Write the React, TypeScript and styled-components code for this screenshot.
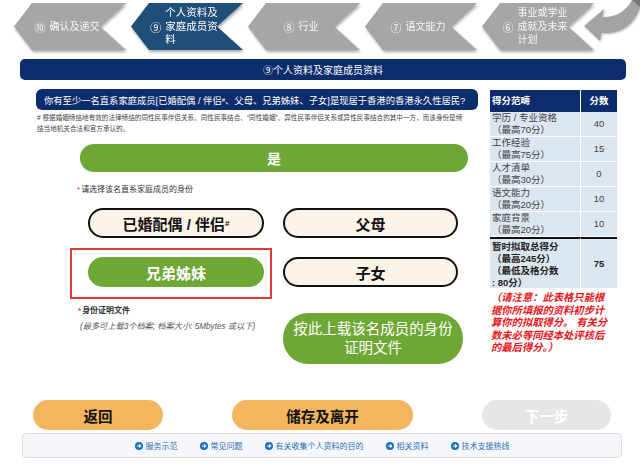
import React from "react";
import styled, { createGlobalStyle } from "styled-components";

const GlobalStyle = createGlobalStyle`
  html, body {
    margin: 0;
    padding: 0;
    background: #fff;
  }
  body {
    font-family: "Liberation Sans", "Noto Sans CJK SC", sans-serif;
    color: #333;
  }
`;

const NAVY = "#0c2c6c";
const GREEN = "#6ea834";
const ORANGE = "#f4b55e";

const Page = styled.div`
  width: 640px;
  height: 471px;
  overflow: hidden;
`;

/* ---------- step chevrons ---------- */
const StepBar = styled.div`
  position: relative;
  display: flex;
  gap: 5px;
  padding: 3px 0 0 14px;
  height: 47px;
`;

const StepShadow = styled.div`
  filter: drop-shadow(1px 2px 1.5px rgba(0, 0, 0, 0.35));
`;

const Step = styled.div<{ $active?: boolean }>`
  width: 112px;
  height: 47px;
  box-sizing: border-box;
  padding: 0 24px 0 18px;
  clip-path: polygon(18px 0, 100% 0, calc(100% - 26px) 50%, 100% 100%, 18px 100%, 0 50%);
  background: ${(p) => (p.$active ? "#1f4e79" : "#a6a6a6")};
  color: ${(p) => (p.$active ? "#fff" : "#f6f6f6")};
  display: flex;
  align-items: center;
  justify-content: center;
  gap: 4px;
  font-size: 10px;
`;

const StepNum = styled.span`
  font-size: 11px;
`;

const StepLabel = styled.span<{ $big?: boolean }>`
  font-size: ${(p) => (p.$big ? "10.5px" : "10px")};
  line-height: 13.5px;
  white-space: nowrap;
`;

const Curl = styled.svg`
  position: absolute;
  top: 0;
  right: 0;
  filter: drop-shadow(1px 1.5px 1px rgba(0, 0, 0, 0.3));
`;

/* ---------- section title ---------- */
const SectionTitle = styled.div`
  margin: 9px 14px 0 20px;
  height: 21px;
  border-radius: 5px;
  background: ${NAVY};
  color: #fff;
  font-size: 10px;
  display: flex;
  align-items: center;
  justify-content: center;
`;

/* ---------- main area ---------- */
const Main = styled.div`
  display: flex;
  gap: 12px;
  margin: 9px 0 0 36px;
  height: 275px;
`;

const LeftCol = styled.div`
  width: 442px;
  display: flex;
  flex-direction: column;
`;

const Question = styled.div`
  height: 21px;
  border-radius: 6px;
  background: ${NAVY};
  color: #fff;
  font-size: 9.3px;
  padding-left: 8px;
  display: flex;
  align-items: center;
  white-space: nowrap;
  sup {
    font-size: 6px;
    vertical-align: 4px;
  }
`;

const Note = styled.div`
  margin-top: 2px;
  padding-left: 1px;
  font-size: 6.6px;
  line-height: 11px;
  color: #444;
  white-space: nowrap;
`;

const YesButton = styled.div`
  margin: 10px 0 0 44px;
  width: 388px;
  height: 28px;
  border-radius: 14px;
  background: ${GREEN};
  color: #fff;
  font-weight: 700;
  font-size: 14px;
  display: flex;
  align-items: center;
  justify-content: center;
`;

const Req = styled.span`
  color: #e53935;
  margin-right: 1px;
`;

const Label = styled.div`
  margin: 13px 0 0 41px;
  font-size: 8px;
  line-height: 10px;
  color: #333;
`;

const OptionGrid = styled.div`
  display: grid;
  grid-template-columns: 176px 175px;
  column-gap: 19px;
  row-gap: 19px;
  margin: 13px 0 0 52px;
`;

const Option = styled.div<{ $selected?: boolean }>`
  height: 30px;
  box-sizing: border-box;
  border-radius: 15px;
  border: 2px solid ${(p) => (p.$selected ? GREEN : "#111")};
  background: ${(p) => (p.$selected ? GREEN : "#fdf4e9")};
  color: ${(p) => (p.$selected ? "#fff" : "#111")};
  font-weight: 700;
  font-size: 15px;
  display: flex;
  align-items: center;
  justify-content: center;
  sup {
    font-size: 8px;
    vertical-align: 6px;
  }
`;

const Highlight = styled.div`
  position: relative;
  &::after {
    content: "";
    position: absolute;
    left: -18px;
    right: -8px;
    top: -9px;
    bottom: -12px;
    border: 2px solid #e53935;
    pointer-events: none;
  }
`;

const UploadRow = styled.div`
  display: flex;
  margin: 18px 0 0 42px;
`;

const UploadInfo = styled.div`
  width: 205px;
`;

const UploadTitle = styled.div`
  font-size: 8px;
  line-height: 12px;
  font-weight: 700;
  color: #333;
`;

const UploadHint = styled.div`
  margin-top: 4px;
  padding-left: 2px;
  font-size: 8.2px;
  line-height: 12px;
  font-style: italic;
  color: #555;
  white-space: nowrap;
`;

const UploadButton = styled.div`
  margin-top: 8px;
  width: 180px;
  height: 51px;
  border-radius: 25px;
  background: ${GREEN};
  color: #fff;
  font-size: 14.5px;
  line-height: 19px;
  text-align: center;
  display: flex;
  align-items: center;
  justify-content: center;
`;

/* ---------- score table ---------- */
const RightCol = styled.div`
  width: 127px;
  margin-top: 1px;
`;

const ScoreGrid = styled.div`
  display: grid;
  grid-template-columns: 90px 37px;
  font-size: 9.5px;
  line-height: 12px;
`;

const HeadCell = styled.div<{ $center?: boolean }>`
  height: 22px;
  padding-left: ${(p) => (p.$center ? "0" : "2px")};
  background: ${NAVY};
  color: #fff;
  font-weight: 700;
  display: flex;
  align-items: center;
  justify-content: ${(p) => (p.$center ? "center" : "flex-start")};
  border-left: ${(p) => (p.$center ? "1px solid #fff" : "none")};
`;

const Cell = styled.div<{ $num?: boolean; $total?: boolean }>`
  background: #dce6f1;
  color: ${(p) => (p.$total ? "#222" : "#444")};
  font-weight: ${(p) => (p.$total ? 700 : 400)};
  box-sizing: border-box;
  height: ${(p) => (p.$total ? "52px" : "25px")};
  padding: ${(p) => (p.$total ? "2px" : "0")} 0 0 2px;
  border-bottom: 1px solid #fff;
  border-top: ${(p) => (p.$total ? "2px solid #111" : "none")};
  border-left: ${(p) => (p.$num ? "1px solid #fff" : "none")};
  white-space: nowrap;
  ${(p) =>
    p.$num &&
    `
    display: flex;
    align-items: center;
    justify-content: center;
    padding: 0;
  `}
`;

const Caution = styled.div`
  margin-top: 3px;
  padding-left: 1px;
  color: #e8161b;
  font-size: 10.3px;
  line-height: 12.5px;
  font-weight: 700;
  font-style: italic;
  white-space: nowrap;
`;

/* ---------- bottom ---------- */
const ButtonRow = styled.div`
  display: flex;
  gap: 69px;
  padding-left: 33px;
  margin-top: 36px;
`;

const NavButton = styled.div<{ $w: number; $disabled?: boolean }>`
  width: ${(p) => p.$w}px;
  height: 30px;
  border-radius: 15px;
  background: ${(p) => (p.$disabled ? "#e6e6e6" : ORANGE)};
  color: ${(p) => (p.$disabled ? "#fff" : "#111")};
  font-weight: 700;
  font-size: 14.5px;
  display: flex;
  align-items: center;
  justify-content: center;
`;

const LinkBar = styled.div`
  margin: 3px 18px 0 22px;
  height: 25px;
  box-sizing: border-box;
  border: 1px solid #d9dde3;
  border-radius: 4px;
  background: #f5f7fa;
  display: flex;
  align-items: center;
  justify-content: center;
  gap: 22px;
`;

const LinkItem = styled.span`
  display: flex;
  align-items: center;
  gap: 3px;
  color: #2f6fb4;
  font-size: 8px;
`;

const LinkIcon = () => (
  <svg width="8" height="8" viewBox="0 0 8 8">
    <circle cx="4" cy="4" r="4" fill="#1a6fc4" />
    <path d="M2 4h3.6M4 2.4L5.7 4 4 5.6" stroke="#fff" strokeWidth="1.1" fill="none" />
  </svg>
);

type StepDef = { num: string; lines: string[]; active?: boolean };

const steps: StepDef[] = [
  { num: "⑩", lines: ["确认及递交"] },
  { num: "⑨", lines: ["个人资料及", "家庭成员资", "料"], active: true },
  { num: "⑧", lines: ["行业"] },
  { num: "⑦", lines: ["语文能力"] },
  { num: "⑥", lines: ["事业或学业", "成就及未来", "计划"] },
];

const scores = [
  { name: "学历 / 专业资格", max: "（最高70分）", value: "40" },
  { name: "工作经验", max: "（最高75分）", value: "15" },
  { name: "人才清单", max: "（最高30分）", value: "0" },
  { name: "语文能力", max: "（最高20分）", value: "10" },
  { name: "家庭背景", max: "（最高20分）", value: "10" },
];

const links = ["服务示范", "常见问题", "有关收集个人资料的目的", "相关资料", "技术支援热线"];

export default function App() {
  return (
    <Page>
      <GlobalStyle />
      <StepBar>
        {steps.map((s) => (
          <StepShadow key={s.num}>
            <Step $active={s.active}>
              <StepNum>{s.num}</StepNum>
              <StepLabel $big={s.active}>
                {s.lines.map((l, i) => (
                  <React.Fragment key={i}>
                    {i > 0 && <br />}
                    {l}
                  </React.Fragment>
                ))}
              </StepLabel>
            </Step>
          </StepShadow>
        ))}
        <Curl width="60" height="46" viewBox="0 0 60 46">
          <path
            d="M4 26 L24 9 L22 17 C36 18 46 11 52 0 L60 0 L60 7 C53 26 40 34 21 33 L20 41 Z"
            fill="#a3a3a3"
          />
          <path d="M52 0 L60 0 L60 7 C57 4 55 2 52 0 Z" fill="#777" />
        </Curl>
      </StepBar>

      <SectionTitle>⑨个人资料及家庭成员资料</SectionTitle>

      <Main>
        <LeftCol>
          <Question>
            你有至少一名直系家庭成员[已婚配偶 / 伴侣<sup>#</sup>、父母、兄弟姊妹、子女]是现居于香港的香港永久性居民?
          </Question>
          <Note>
            # 根据婚姻缔结地有效的法律缔结的同性民事伴侣关系、同性民事结合、“同性婚姻”、异性民事伴侣关系或异性民事结合的其中一方，而该身份是缔
            <br />
            结当地机关合法和官方承认的。
          </Note>
          <YesButton>是</YesButton>
          <Label>
            <Req>*</Req>请选择该名直系家庭成员的身份
          </Label>
          <OptionGrid>
            <Option>
              已婚配偶 / 伴侣<sup>#</sup>
            </Option>
            <Option>父母</Option>
            <Highlight>
              <Option $selected>兄弟姊妹</Option>
            </Highlight>
            <Option>子女</Option>
          </OptionGrid>
          <UploadRow>
            <UploadInfo>
              <UploadTitle>
                <Req>*</Req>身份证明文件
              </UploadTitle>
              <UploadHint>(最多可上载3个档案; 档案大小: 5Mbytes 或以下)</UploadHint>
            </UploadInfo>
            <UploadButton>
              按此上载该名成员的身份
              <br />
              证明文件
            </UploadButton>
          </UploadRow>
        </LeftCol>

        <RightCol>
          <ScoreGrid>
            <HeadCell>得分范畴</HeadCell>
            <HeadCell $center>分数</HeadCell>
            {scores.map((s) => (
              <React.Fragment key={s.name}>
                <Cell>
                  {s.name}
                  <br />
                  {s.max}
                </Cell>
                <Cell $num>{s.value}</Cell>
              </React.Fragment>
            ))}
            <Cell $total>
              暂时拟取总得分
              <br />
              （最高245分）
              <br />
              （最低及格分数
              <br />: 80分）
            </Cell>
            <Cell $total $num>
              75
            </Cell>
          </ScoreGrid>
          <Caution>
            （请注意：此表格只能根
            <br />
            据你所填报的资料初步计
            <br />
            算你的拟取得分。 有关分
            <br />
            数未必等同经本处评核后
            <br />
            的最后得分。）
          </Caution>
        </RightCol>
      </Main>

      <ButtonRow>
        <NavButton $w={130}>返回</NavButton>
        <NavButton $w={181}>储存及离开</NavButton>
        <NavButton $w={129} $disabled>
          下一步
        </NavButton>
      </ButtonRow>

      <LinkBar>
        {links.map((l) => (
          <LinkItem key={l}>
            <LinkIcon />
            {l}
          </LinkItem>
        ))}
      </LinkBar>
    </Page>
  );
}
